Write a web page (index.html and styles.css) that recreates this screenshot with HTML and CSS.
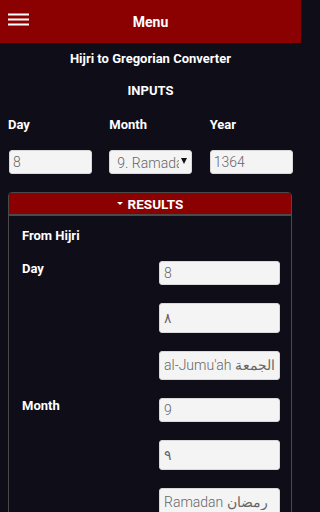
FILE: index.html
```html
<!DOCTYPE html>
<html>
<head>
<meta charset="utf-8">
<link rel="stylesheet" href="styles.css">
</head>
<body>
<div class="page">
<header class="topbar">
  <svg class="burger" width="22" height="14" viewBox="0 0 22 14">
    <rect x="0" y="0.5" width="21" height="2" fill="#ffffff"/>
    <rect x="0" y="5.5" width="21" height="2" fill="#ffffff"/>
    <rect x="0" y="10.5" width="21" height="2" fill="#ffffff"/>
  </svg>
  <span class="topbar-title">Menu</span>
</header>
<main>
  <h1 class="title">Hijri to Gregorian Converter</h1>
  <h2 class="section">INPUTS</h2>
  <div class="inputs">
    <div class="col">
      <label class="lbl">Day</label>
      <input class="field" type="text" value="8">
    </div>
    <div class="col">
      <label class="lbl">Month</label>
      <div class="field select">
        <span class="select-text">9. Ramadan</span>
        <span class="caret"></span>
      </div>
    </div>
    <div class="col">
      <label class="lbl">Year</label>
      <input class="field" type="text" value="1364">
    </div>
  </div>
  <section class="panel">
    <div class="panel-head"><span class="tri"></span>RESULTS</div>
    <div class="panel-body">
      <div class="from">From Hijri</div>
      <div class="rgroup">
        <div class="rlabel">Day</div>
        <div class="rfields">
          <input class="rfield short" type="text" value="8">
          <input class="rfield tall" type="text" value="٨">
          <input class="rfield tall" type="text" value="al-Jumu'ah الجمعة">
        </div>
      </div>
      <div class="rgroup">
        <div class="rlabel">Month</div>
        <div class="rfields">
          <input class="rfield short" type="text" value="9">
          <input class="rfield tall" type="text" value="٩">
          <input class="rfield tall" type="text" value="Ramadan رمضان">
        </div>
      </div>
    </div>
  </section>
</main>
</div>
</body>
</html>
```
FILE: styles.css
```css
html, body {
  margin: 0;
  padding: 0;
  background: #0e0d18;
  color: #ffffff;
  font-family: Roboto, "Noto Sans", Arial, sans-serif;
  overflow: hidden;
}
.page {
  width: 301px;
  height: 512px;
  overflow: hidden;
}
.topbar {
  height: 43px;
  background: #8b0000;
  display: flex;
  align-items: center;
  justify-content: center;
  position: relative;
}
.burger {
  position: absolute;
  left: 8px;
  top: 13px;
}
.topbar-title {
  font-weight: 700;
  font-size: 14px;
}
.title {
  margin: 0;
  padding-top: 8px;
  height: 24px;
  font-size: 13px;
  font-weight: 700;
  text-align: center;
  line-height: 16px;
}
.section {
  margin: 0;
  padding-top: 8px;
  font-size: 13px;
  font-weight: 700;
  text-align: center;
  line-height: 16px;
  height: 34px;
}
.inputs {
  display: grid;
  grid-template-columns: 1fr 1fr 1fr;
}
.col {
  display: flex;
  flex-direction: column;
  padding: 0 8px 0 9px;
}
.col:nth-child(1) { padding-left: 8px; }
.lbl {
  font-size: 13px;
  font-weight: 700;
  line-height: 16px;
  height: 16px;
  margin-bottom: 17px;
}
.field {
  box-sizing: border-box;
  height: 24px;
  width: 83px;
  border: 1px solid #d8d8d8;
  border-radius: 3px;
  background: #f4f4f4;
  color: #666666;
  font-family: Roboto, "Noto Sans", sans-serif;
  font-weight: 300;
  font-size: 14px;
  padding: 0 3px;
  outline: none;
}
.col:nth-child(1) .field { margin-left: 1px; }
.select {
  display: flex;
  align-items: center;
  padding: 1px 4px 0 7px;
  overflow: hidden;
}
.select-text {
  flex: 1;
  overflow: hidden;
  white-space: nowrap;
  color: #666666;
}
.caret {
  width: 0;
  height: 0;
  border-left: 3px solid transparent;
  border-right: 3px solid transparent;
  border-top: 6px solid #111111;
  margin-left: 2px;
  margin-top: -3px;
}
.panel {
  margin: 18px 9px 0 8px;
  border: 1px solid #4a4a4a;
  border-radius: 4px 4px 0 0;
}
.panel-head {
  background: #8b0000;
  height: 21px;
  border-bottom: 2px solid #4a4a4a;
  border-radius: 3px 3px 0 0;
  display: flex;
  align-items: center;
  justify-content: center;
  font-weight: 700;
  font-size: 13.5px;
}
.tri {
  width: 0;
  height: 0;
  border-left: 3px solid transparent;
  border-right: 3px solid transparent;
  border-top: 3px solid #ffffff;
  margin-right: 5px;
}
.panel-body {
  padding: 12px 11px 0 13px;
  height: 400px;
}
.from {
  font-size: 13px;
  font-weight: 700;
  line-height: 16px;
  margin-bottom: 17px;
}
.rgroup {
  display: grid;
  grid-template-columns: 1fr 121px;
  margin-bottom: 18px;
}
.rlabel {
  font-size: 13px;
  font-weight: 700;
  line-height: 16px;
}
.rfields {
  display: flex;
  flex-direction: column;
  gap: 18px;
}
.rfield {
  box-sizing: border-box;
  width: 121px;
  border: 1px solid #d8d8d8;
  border-radius: 3px;
  background: #f4f4f4;
  color: #666666;
  font-family: Roboto, "Noto Sans", sans-serif;
  font-weight: 300;
  font-size: 14px;
  padding: 0 4px;
  outline: none;
}
.short { height: 24px; }
.tall { height: 29.5px; }
```
